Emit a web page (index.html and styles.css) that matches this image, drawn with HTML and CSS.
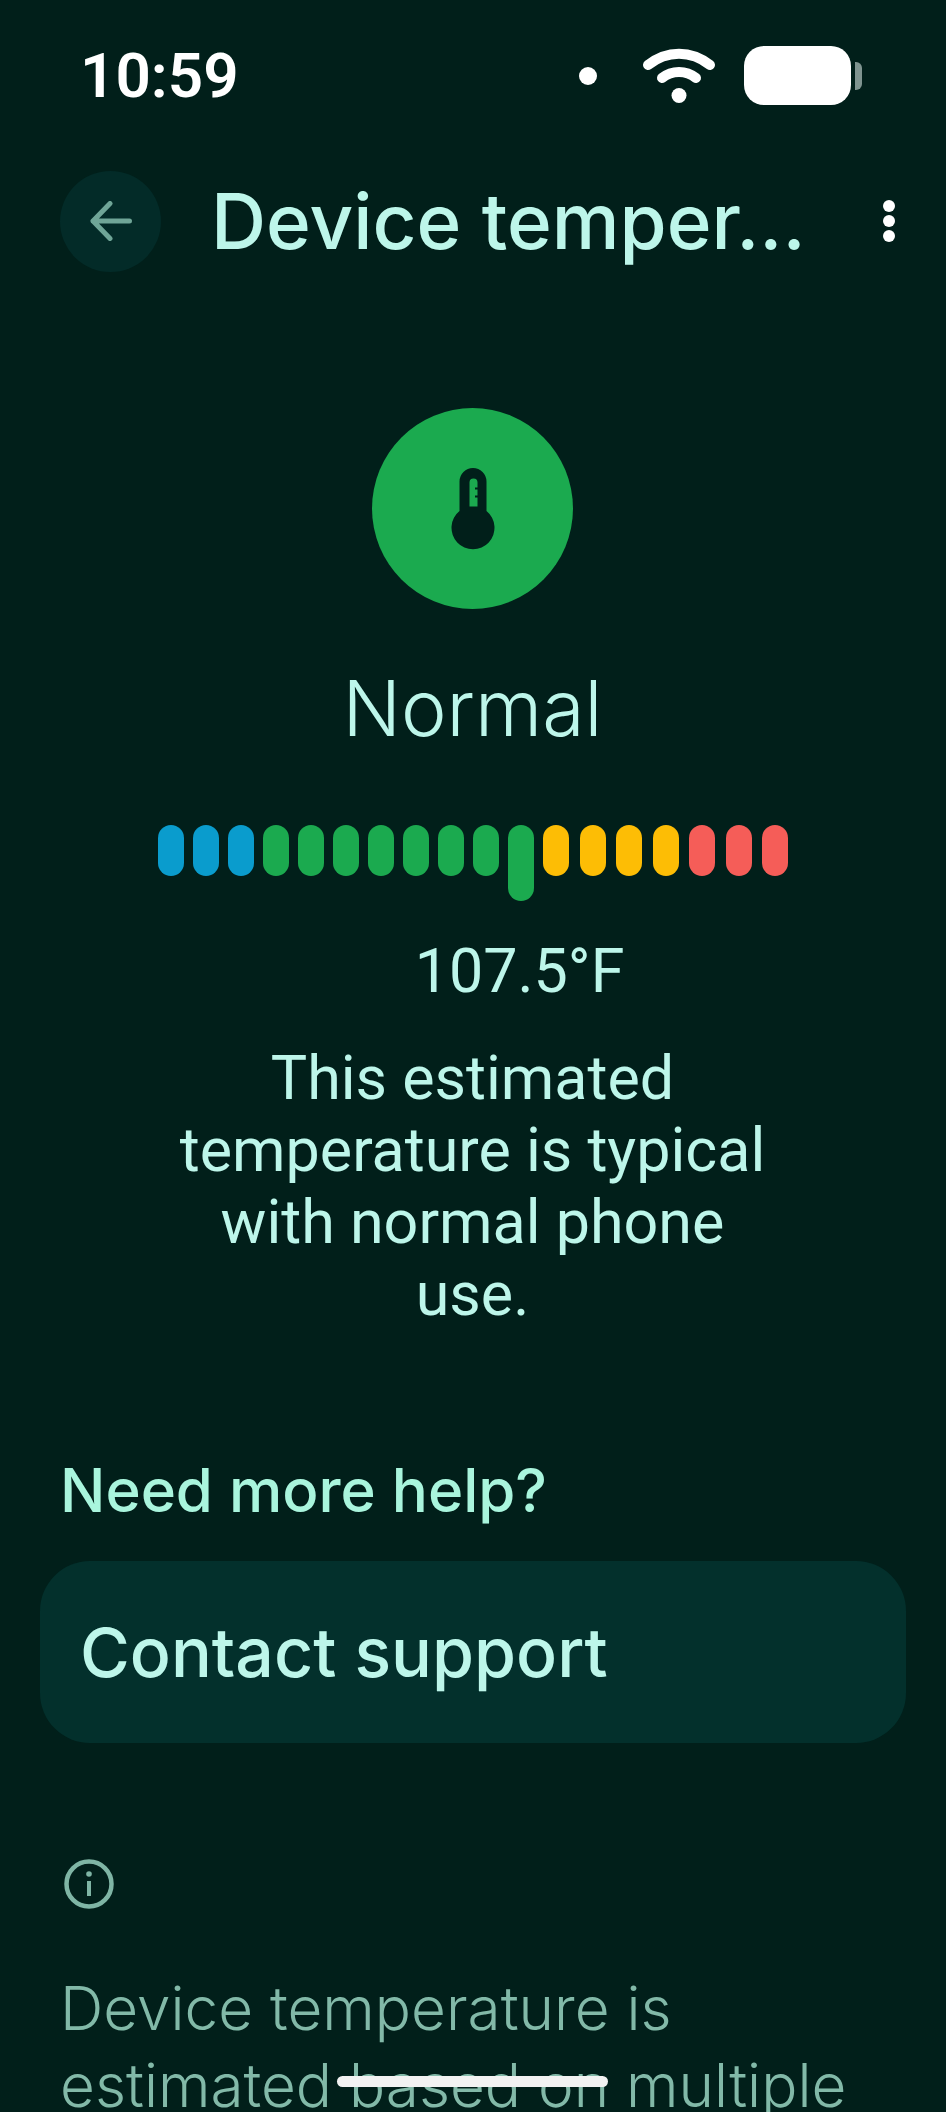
FILE: index.html
```html
<!DOCTYPE html>
<html lang="en">
<head>
<meta charset="utf-8">
<title>Device temperature</title>
<link rel="stylesheet" href="styles.css">
</head>
<body>
<div class="screen">
  <header class="status">
    <span class="time">10:59</span>
    <div class="status-icons">
      <span class="dot"></span>
      <svg class="wifi" viewBox="0 0 74 55" aria-hidden="true">
        <path d="M6 17 C25 2 49 2 68 17" fill="none" stroke="#fff" stroke-width="10" stroke-linecap="round"/>
        <path d="M20 30 C30 22 44 22 54 30" fill="none" stroke="#fff" stroke-width="10" stroke-linecap="round"/>
        <circle cx="37" cy="47.5" r="7.5" fill="#fff"/>
      </svg>
      <span class="battery"></span>
      <span class="nub"></span>
    </div>
  </header>

  <nav class="appbar">
    <button class="back" aria-label="Back">
      <svg viewBox="0 0 42 40" width="42" height="40" aria-hidden="true">
        <path d="M20 2.500 L3 20 L20 37.500 M3 20 H39.500" fill="none" stroke="#6fa597" stroke-width="5" stroke-linecap="round" stroke-linejoin="round"/>
      </svg>
    </button>
    <h1 class="title">Device temper...</h1>
    <div class="more"><span></span><span></span><span></span></div>
  </nav>

  <main>
    <section class="hero">
      <div class="badge">
        <svg viewBox="0 0 44 82" width="44" height="82" aria-hidden="true">
          <path fill="#011f1a" fill-rule="evenodd" d="M8.500 13.500 a13.500 13.500 0 0 1 27 0 V43 a21.500 21.500 0 1 1 -27 0 Z M18.500 14.500 a4 4 0 0 1 8 0 v5 h-2.500 v2 h2.500 v6 h-2.500 v2 h2.500 v9 h-8 Z"/>
        </svg>
      </div>
      <h2 class="status-name">Normal</h2>
      <div class="scale">
        <div class="group">
          <span class="bar cold"></span><span class="bar cold"></span><span class="bar cold"></span>
          <span class="bar ok"></span><span class="bar ok"></span><span class="bar ok"></span><span class="bar ok"></span><span class="bar ok"></span><span class="bar ok"></span><span class="bar ok"></span>
          <span class="bar ok current"></span>
        </div>
        <div class="group wide">
          <span class="bar warm"></span><span class="bar warm"></span><span class="bar warm"></span><span class="bar warm"></span>
          <span class="bar hot"></span><span class="bar hot"></span><span class="bar hot"></span>
        </div>
      </div>
      <p class="reading">107.5°F</p>
      <p class="summary">This estimated temperature is typical with normal phone use.</p>
    </section>

    <section class="help">
      <h3 class="help-title">Need more help?</h3>
      <div class="card">Contact support</div>
    </section>

    <section class="info">
      <svg class="info-icon" viewBox="0 0 50 50" aria-hidden="true">
        <circle cx="25" cy="25" r="22.500" fill="none" stroke="#7fb5a5" stroke-width="4.500"/>
        <rect x="23" y="22" width="4" height="15" fill="#7fb5a5"/>
        <circle cx="25" cy="15" r="2.800" fill="#7fb5a5"/>
      </svg>
      <p class="info-text">Device temperature is estimated based on multiple</p>
    </section>
  </main>

  <div class="home"></div>
</div>
</body>
</html>
```
FILE: styles.css
```css
* { box-sizing: border-box; }
html, body { margin: 0; padding: 0; }
body { background: #011f1a; }
.screen {
  position: relative;
  width: 946px;
  height: 2112px;
  overflow: hidden;
  background: #011f1a;
  color: #bdf6ea;
  font-family: Roboto, sans-serif;
}
.status {
  height: 170px;
  padding: 45px 84px 0 80px;
  display: flex;
  justify-content: space-between;
  align-items: flex-start;
}
.time {
  font-size: 62px;
  font-weight: 600;
  line-height: 62px;
  color: #fff;
}
.status-icons {
  display: flex;
  align-items: center;
  height: 59px;
  margin-top: 1px;
}
.dot {
  width: 18px;
  height: 18px;
  border-radius: 50%;
  background: #fff;
  margin-right: 45px;
}
.wifi { width: 74px; height: 55px; margin-right: 28px; }
.battery {
  width: 107px;
  height: 59px;
  border-radius: 20px;
  background: #fff;
  margin-right: 4px;
}
.nub {
  width: 7px;
  height: 28px;
  border-radius: 0 6px 6px 0;
  background: #7f9490;
}
.appbar {
  height: 102px;
  padding: 0 51px 0 60px;
  display: flex;
  align-items: center;
}
.back {
  width: 101px;
  height: 101px;
  border: 0;
  padding: 0;
  border-radius: 50%;
  background: #032b28;
  display: flex;
  align-items: center;
  justify-content: center;
  margin-right: 50px;
  flex: none;
}
.title {
  margin: 0;
  flex: 1;
  font-family: Inter, sans-serif;
  font-size: 76.300px;
  font-weight: 500;
  line-height: 102px;
  white-space: nowrap;
}
.more { display: flex; flex-direction: column; gap: 3px; }
.more span { width: 12px; height: 12px; border-radius: 50%; background: #fff; }
.hero {
  display: flex;
  flex-direction: column;
  align-items: center;
  padding: 136px 1px 0 0;
}
.badge {
  width: 201px;
  height: 201px;
  border-radius: 50%;
  background: #1baa4f;
  display: flex;
  align-items: center;
  justify-content: center;
}
.status-name {
  margin: 48px 0 0;
  font-family: Inter, sans-serif;
  font-size: 77px;
  font-weight: 350;
  line-height: 102px;
}
.scale {
  margin-top: 66px;
  height: 76px;
  display: flex;
  gap: 9px;
  align-self: flex-start;
  margin-left: 158px;
}
.group { display: flex; gap: 9px; align-items: flex-start; }
.group.wide { gap: 10.500px; }
.bar { width: 26px; height: 51px; border-radius: 13px; }
.cold { background: #0a9ccd; }
.ok { background: #1baa4f; }
.warm { background: #fdbd05; }
.hot { background: #f55d58; }
.current { height: 76px; }
.reading {
  margin: 34px 0 0 94px;
  font-size: 61px;
  line-height: 72px;
}
.summary {
  margin: 35px 0 0;
  width: 620px;
  text-align: center;
  font-size: 61px;
  line-height: 72px;
}
.help { padding: 0 40px; margin-top: 124px; }
.help-title {
  margin: 0 0 35px 20px;
  font-family: Inter, sans-serif;
  font-size: 60px;
  font-weight: 500;
  line-height: 72px;
  color: #a9f5dd;
}
.card {
  height: 182px;
  border-radius: 50px;
  background: #03302c;
  display: flex;
  align-items: center;
  padding-left: 40px;
  font-family: Inter, sans-serif;
  font-size: 68px;
  font-weight: 500;
}
.info { padding: 116px 60px 0; }
.info-icon { display: block; width: 50px; height: 50px; margin-left: 4px; }
.info-text {
  margin: 61px 0 0;
  width: 800px;
  font-family: Inter, sans-serif;
  font-size: 60.200px;
  font-weight: 350;
  line-height: 77px;
  color: #82b9a8;
}
.home {
  position: absolute;
  left: 337px;
  top: 2076px;
  width: 271px;
  height: 11px;
  border-radius: 6px;
  background: #f2f2f2;
}
```
